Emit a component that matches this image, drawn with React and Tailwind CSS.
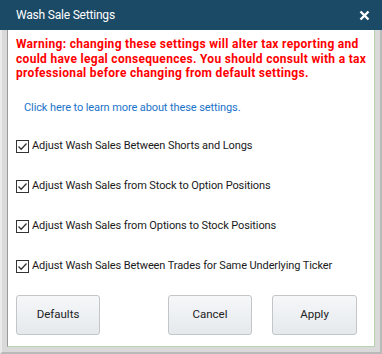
import React, { useState } from 'react';

const options = [
  'Adjust Wash Sales Between Shorts and Longs',
  'Adjust Wash Sales from Stock to Option Positions',
  'Adjust Wash Sales from Options to Stock Positions',
  'Adjust Wash Sales Between Trades for Same Underlying Ticker',
];

const CheckBox = ({ checked, onChange, label }) => (
  <label className="flex items-center h-[14px] cursor-pointer select-none" onClick={onChange}>
    <span className="w-[13px] h-[13px] border border-[#333] bg-white flex items-center justify-center shrink-0">
      {checked && (
        <svg width="11" height="11" viewBox="0 0 11 11">
          <path d="M1.5 5.5 L4.2 8.2 L9.5 2.5" fill="none" stroke="#333" strokeWidth="1.3" />
        </svg>
      )}
    </span>
    <span className="ml-[3px] text-[11px] tracking-[-0.1px] text-[#1a1a1a] whitespace-nowrap">{label}</span>
  </label>
);

const DlgButton = ({ children, className = '' }) => (
  <button
    className={`h-[40px] w-[84px] rounded-[3px] border border-[#c3c6c9] bg-gradient-to-b from-[#f5f7f9] to-[#e6e9ec] text-[11.5px] text-[#222] ${className}`}
  >
    {children}
  </button>
);

export default function App() {
  const [checked, setChecked] = useState([true, true, true, true]);

  const toggle = (i) => {
    const next = [...checked];
    next[i] = !next[i];
    setChecked(next);
  };

  return (
    <div
      className="w-[382px] h-[354px] flex flex-col bg-[#1b4a66]"
      style={{ fontFamily: 'Roboto, "Noto Sans", sans-serif' }}
    >
      <div className="h-[30px] flex items-center justify-between pl-[16px] pr-[12px] shrink-0">
        <span className="text-white text-[12px] tracking-[-0.2px]">Wash Sale Settings</span>
        <svg width="11" height="11" viewBox="0 0 11 11">
          <path d="M1.5 1.5 L9.5 9.5 M9.5 1.5 L1.5 9.5" stroke="white" strokeWidth="2.4" />
        </svg>
      </div>

      <div className="flex-1 flex flex-col bg-[#d9d9d9] border-l-2 border-r-2 border-b-2 border-l-[#eaeaea] border-r-[#b9b9b9] border-b-[#b9b9b9] px-[5px] pb-[5px]">
        <div className="flex-1 bg-white border-l border-r border-b border-l-[#9a9a9a] border-r-[#b7d4b0] border-b-[#b7d4b0] flex flex-col">
          <p className="mt-[7px] ml-[8px] mr-[2px] text-[12px] font-bold leading-[14.5px] tracking-[0.3px] text-[#ff0000]">
            Warning: changing these settings will alter tax reporting and could have legal consequences. You should
            consult with a tax professional before changing from default settings.
          </p>

          <a className="mt-[20px] ml-[16px] text-[11px] tracking-[-0.1px] text-[#1a73c9] leading-[14px]">
            Click here to learn more about these settings.
          </a>

          <div className="mt-[25px] ml-[8px] flex flex-col gap-[26px]">
            {options.map((label, i) => (
              <CheckBox key={label} label={label} checked={checked[i]} onChange={() => toggle(i)} />
            ))}
          </div>

          <div className="mt-[21px] ml-[8px] flex">
            <DlgButton>Defaults</DlgButton>
            <DlgButton className="ml-[68px]">Cancel</DlgButton>
            <DlgButton className="ml-[20px] w-[85px]">Apply</DlgButton>
          </div>
        </div>
      </div>
    </div>
  );
}
